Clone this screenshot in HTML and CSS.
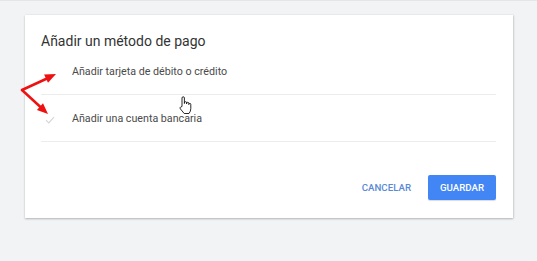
FILE: index.html
```html
<!DOCTYPE html>
<html lang="es">
<head>
  <meta charset="UTF-8">
  <meta name="viewport" content="width=device-width, initial-scale=1.0">
  <title>Añadir un método de pago</title>
  <link rel="stylesheet" href="styles.css">
</head>
<body>

  <div class="dialog">
    <h2>Añadir un método de pago</h2>

    <div class="option-list">
      <div class="option">
        <span class="check"></span>
        <span>Añadir tarjeta de débito o crédito</span>
      </div>
      <div class="option">
        <span class="check">
          <svg width="10" height="8" viewBox="0 0 10 8"><path d="M1 4.2 L3.8 7 L9 1.2" fill="none" stroke="#d6d6d6" stroke-width="1.2"/></svg>
        </span>
        <span>Añadir una cuenta bancaria</span>
      </div>
    </div>

    <div class="actions">
      <button class="btn-text">CANCELAR</button>
      <button class="btn-primary">GUARDAR</button>
    </div>
  </div>

  <!-- flechas de la captura -->
  <svg class="arrows" width="70" height="60" viewBox="0 0 70 60">
    <g stroke="#ee1111" stroke-width="2.5" fill="none" stroke-linecap="round">
      <path d="M2 29 L27 17.5"/>
      <path d="M2 29 L21 46.5"/>
    </g>
    <g fill="#ee1111">
      <path d="M36 13 L28 21.8 L24.1 13.6 Z"/>
      <path d="M28 53 L16.9 48.9 L23 42.2 Z"/>
    </g>
  </svg>

  <svg class="cursor" width="14" height="19" viewBox="0 0 14 19">
    <path d="M4 10.5 V2 a1.2 1.2 0 0 1 2.4 0 V7.5 V6.8 a1.1 1.1 0 0 1 2.2 0 V8 V7.4 a1.1 1.1 0 0 1 2.2 0 V8.6 V8.4 a1 1 0 0 1 2 0 V12.5 q0 2.8 -1.8 5 H6.2 L2.3 12.8 q-0.8 -1.2 0.4 -1.8 Z" fill="#fff" stroke="#111" stroke-width="0.9" stroke-linejoin="round"/>
  </svg>

</body>
</html>
```

FILE: styles.css
```css
body {
  font-family: Roboto, "Liberation Sans", Arial, sans-serif;
  margin: 0;
  padding: 15px 0 0 25px;
  height: 261px;
  box-sizing: border-box;
  background-color: #f2f3f5;
  border-top: 1px solid #e4e5e7;
  position: relative;
  overflow: hidden;
}
.dialog {
  background: #fff;
  width: 488px;
  height: 203px;
  margin-top: -1px;
  box-sizing: border-box;
  padding: 0 17px 0 16px;
  box-shadow: 0 1px 2px rgba(0, 0, 0, 0.25), 1px 0 2px rgba(0, 0, 0, 0.08);
}
h2 {
  margin: 0;
  padding-top: 19px;
  font-size: 14px;
  line-height: 14px;
  font-weight: 400;
  color: #333;
}
.option {
  height: 46px;
  display: flex;
  align-items: center;
  border-bottom: 1px solid #ececec;
  font-size: 10.7px;
  color: #4a4a4a;
}
.check {
  width: 31px;
  display: flex;
  padding: 3px 0 0 4px;
  box-sizing: border-box;
}
.actions {
  display: flex;
  justify-content: flex-end;
  align-items: center;
  padding-top: 33px;
}
button {
  font-family: Roboto, "Liberation Sans", Arial, sans-serif;
  font-weight: 500;
  font-size: 9.7px;
  border: none;
  cursor: pointer;
  height: 25px;
  border-radius: 2px;
}
.btn-text {
  background: none;
  color: #5a8ad6;
  padding: 0;
  margin-right: 17px;
}
.btn-primary {
  background: #4285f4;
  color: #fff;
  width: 68px;
  padding: 0;
  box-shadow: 0 1px 1px rgba(0, 0, 0, 0.15);
}
.arrows {
  position: absolute;
  left: 20px;
  top: 60px;
}
.cursor {
  position: absolute;
  left: 178px;
  top: 95px;
}
```
